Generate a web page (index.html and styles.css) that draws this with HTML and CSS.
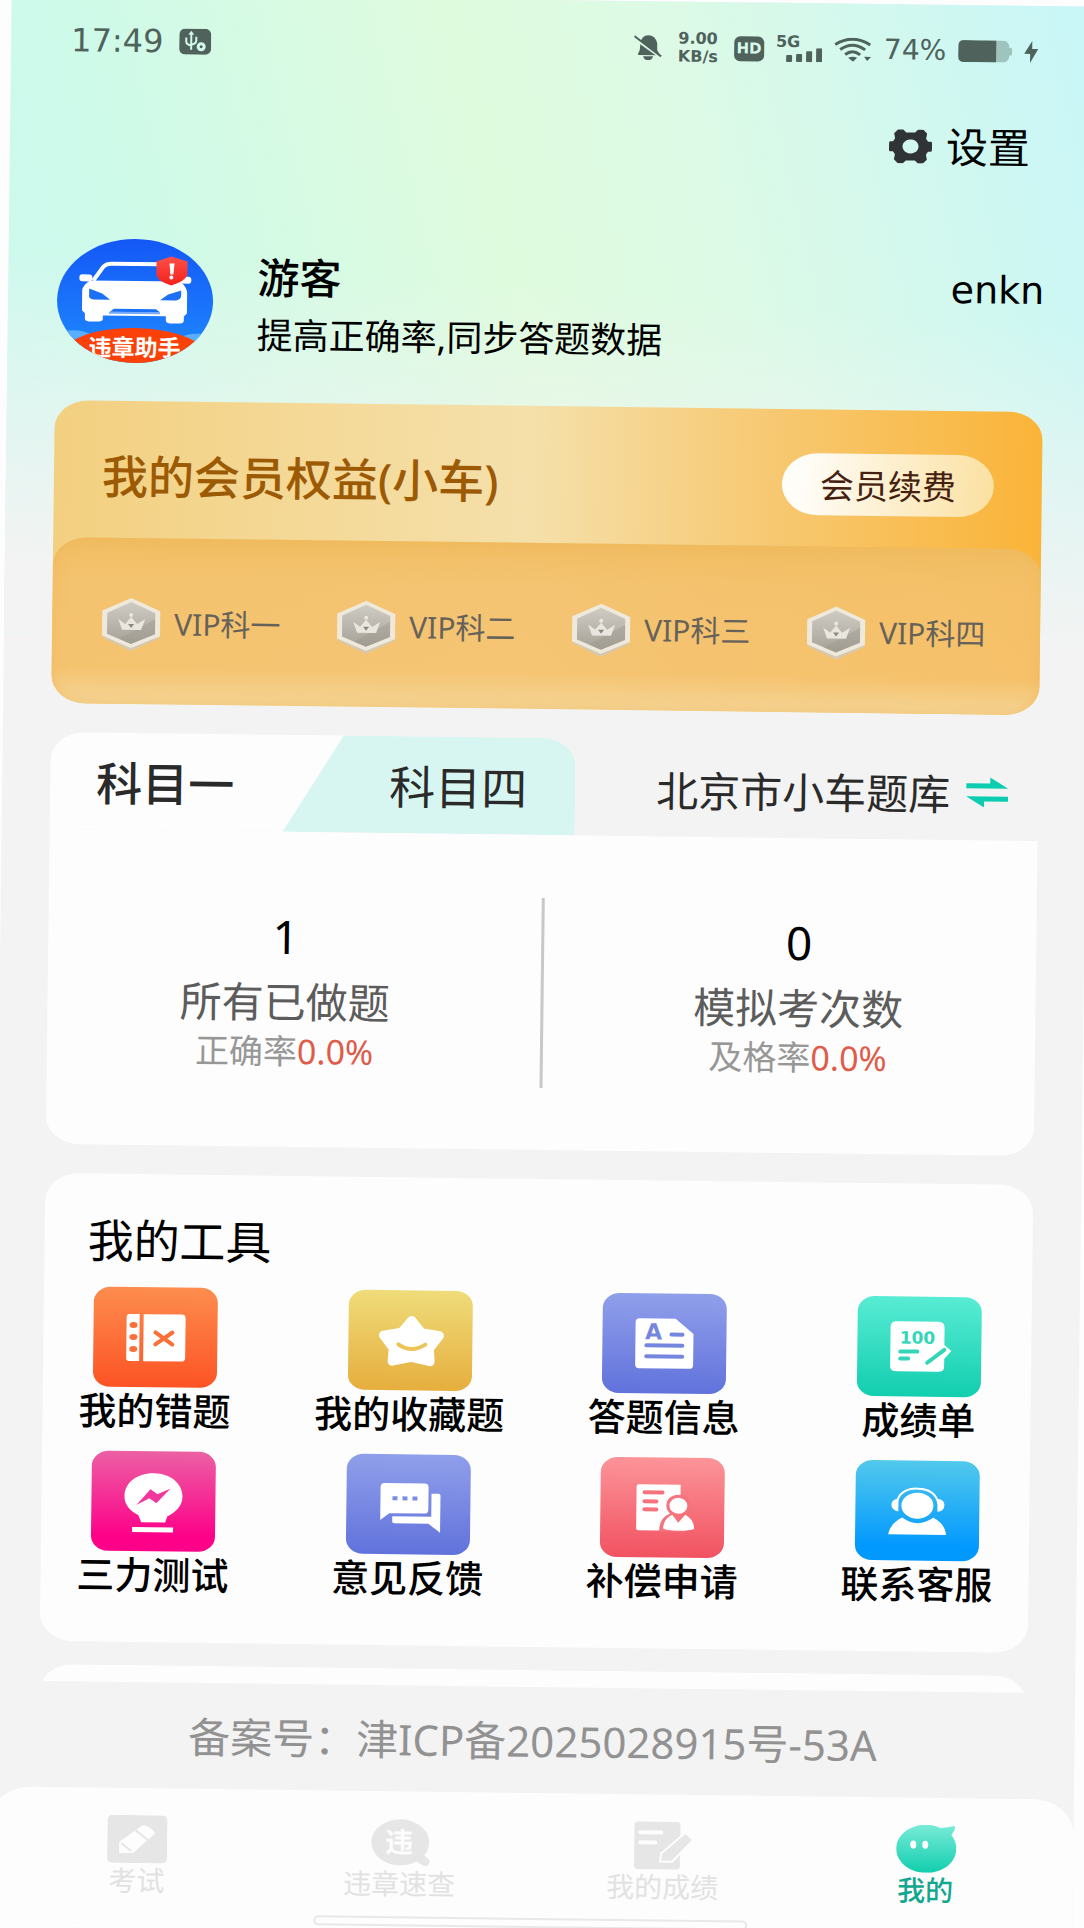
FILE: index.html
```html
<!DOCTYPE html>
<html lang="zh-CN">
<head>
    <meta charset="UTF-8">
    <meta name="viewport" content="width=device-width, initial-scale=1.0">
    <title>我的</title>
    <link rel="stylesheet" href="styles.css">
</head>
<body>
    <div class="screen">
        <div class="status-bar">
            <span class="time">17:49</span>
            <svg class="usb" width="32" height="26" viewBox="0 0 32 26">
                <rect width="32" height="26" rx="6" fill="#4f625c"/>
                <path d="M12 21V5M7 9v4q0 3 5 4M17 8v4q0 3-5 4" fill="none" stroke="#d2faea" stroke-width="2"/>
                <path d="M12 2l3 4H9z" fill="#d2faea"/>
                <circle cx="22" cy="18" r="3" fill="none" stroke="#d2faea" stroke-width="3"/>
            </svg>
            <div class="status-right">
                <svg width="28" height="26" viewBox="0 0 28 26">
                    <path d="M4 19q2-2 2-9Q7 1 14 1t9 8v7l2 3v2H4zM9 22h10q-1 4-5 4t-5-4z" fill="#4f625c"/>
                    <path d="M0 4l27 19" stroke="#dcfae6" stroke-width="3"/>
                    <path d="M0 2l27 20" stroke="#4f625c" stroke-width="2"/>
                </svg>
                <span class="speed"><b>9.00</b><b>KB/s</b></span>
                <span class="hd">HD</span>
                <span class="signal">
                    <b>5G</b>
                    <svg width="36" height="14" viewBox="0 0 36 14" fill="#4f625c">
                        <rect x="0" y="7" width="6" height="7" rx="1"/>
                        <rect x="10" y="6" width="6" height="8" rx="1"/>
                        <rect x="20" y="3" width="6" height="11" rx="1"/>
                        <rect x="30" y="0" width="6" height="14" rx="1"/>
                    </svg>
                </span>
                <svg width="38" height="24" viewBox="0 0 38 24">
                    <g fill="none" stroke="#4f625c" stroke-width="3">
                        <path d="M1 7Q18-4 36 7M6 12q12-9 25 0M11 17q7-6 15 0"/>
                    </g>
                    <path d="M14 20q5-2 9 0l-4 4zM30 19h7l-4 4z" fill="#4f625c"/>
                </svg>
                <span class="percent">74%</span>
                <svg width="54" height="22" viewBox="0 0 54 22">
                    <rect x="20" width="31" height="22" rx="6" fill="#9fc4bd"/>
                    <rect x="50" y="7" width="4" height="8" rx="2" fill="#9fc4bd"/>
                    <path d="M6 0h32v22H6q-6 0-6-6V6q0-6 6-6z" fill="#4f625c"/>
                </svg>
                <svg width="14" height="22" viewBox="0 0 14 22">
                    <path d="M8 0v8h6L6 22v-9H0z" fill="#4f625c"/>
                </svg>
            </div>
        </div>

        <div class="settings-row">
            <a href="#" class="settings">
                <svg width="43" height="34" viewBox="0 0 43 34">
                    <path fill="#303336" fill-rule="evenodd" d="M9 0h5l3 3h9l3-3h5l4 4-1 5 2 3h3q1 0 1 2v6q0 2-1 2h-3l-2 3 1 5-4 4h-5l-3-3h-9l-3 3H9l-4-4 1-5-2-3H1q-1 0-1-2v-6q0-2 1-2h3l2-3-1-5zM21 10a8 7 0 1 0 1 0z"/>
                </svg>
                <span>设置</span>
            </a>
        </div>

        <div class="profile">
            <svg class="avatar" width="158" height="126" viewBox="0 0 158 126">
                <defs>
                    <clipPath id="oval"><ellipse cx="79" cy="63" rx="78" ry="62"/></clipPath>
                    <linearGradient id="sky" x1="0" y1="0" x2="0" y2="1">
                        <stop offset="0" stop-color="#1457f6"/>
                        <stop offset="1" stop-color="#1f8cff"/>
                    </linearGradient>
                    <linearGradient id="shield" x1="0" y1="0" x2="0" y2="1">
                        <stop offset="0" stop-color="#fb5148"/>
                        <stop offset="1" stop-color="#f5211c"/>
                    </linearGradient>
                </defs>
                <g clip-path="url(#oval)">
                    <rect width="158" height="126" fill="url(#sky)"/>
                    <ellipse cx="18" cy="108" rx="26" ry="15" fill="#5aaeff"/>
                    <ellipse cx="142" cy="110" rx="26" ry="15" fill="#5aaeff"/>
                    <path d="M37 43l10-14q3-3 8-3h48q6 0 9 4l8 14" fill="none" stroke="#fff" stroke-width="4"/>
                    <rect x="23" y="37" width="13" height="7" rx="3" fill="#fff"/>
                    <rect x="122" y="38" width="13" height="7" rx="3" fill="#fff"/>
                    <path fill="#fff" d="M34 43h90q7 6 7 12v20l-3 3v4q0 3-4 3h-10q-4 0-4-3v-4H47v3q0 3-4 3H33q-4 0-4-3v-5l-3-3V53q0-5 8-10z"/>
                    <path fill="#1b70f5" d="M33 51l13 5 8 6H37q-5-1-4-5zM125 52l-13 4-8 6h16q5-1 5-5zM58 71h42l4 3H54z"/>
                    <path fill="#1b70f5" d="M53 74h51v2H53z" opacity="0.600"/>
                    <path fill="url(#shield)" d="M115 18l16 5v13q-2 7-16 11-14-4-15-11V23z"/>
                    <path d="M113 25h5l-1 11h-3z" fill="#fff"/>
                    <circle cx="115" cy="39" r="2" fill="#fff"/>
                    <ellipse cx="79" cy="122" rx="76" ry="32" fill="#fb4107"/>
                    <text x="79" y="118" text-anchor="middle" class="avatar-text">违章助手</text>
                </g>
            </svg>
            <div class="profile-info">
                <h1>游客</h1>
                <p>提高正确率,同步答题数据</p>
            </div>
            <span class="user-code">enkn</span>
        </div>

        <div class="vip-card">
            <div class="vip-head">
                <h2>我的会员权益(小车)</h2>
                <button class="renew">会员续费</button>
            </div>
            <div class="vip-list">
                <a href="#"><svg width="62" height="54" viewBox="0 0 62 54"><use href="#medal"/></svg>VIP科一</a>
                <a href="#"><svg width="62" height="54" viewBox="0 0 62 54"><use href="#medal"/></svg>VIP科二</a>
                <a href="#"><svg width="62" height="54" viewBox="0 0 62 54"><use href="#medal"/></svg>VIP科三</a>
                <a href="#"><svg width="62" height="54" viewBox="0 0 62 54"><use href="#medal"/></svg>VIP科四</a>
            </div>
        </div>

        <div class="subject">
            <div class="tabs">
                <button class="tab tab-one">科目一</button>
                <button class="tab tab-four">科目四</button>
                <a href="#" class="bank">
                    <span>北京市小车题库</span>
                    <svg width="42" height="30" viewBox="0 0 42 30" fill="#0ccdb0">
                        <path d="M0 6h24V0l18 11H0zM42 24H18v6L0 19h42z"/>
                    </svg>
                </a>
            </div>
            <div class="stats">
                <div class="stat">
                    <div class="number">1</div>
                    <div class="label">所有已做题</div>
                    <div class="rate">正确率<span>0.0%</span></div>
                </div>
                <div class="divider"></div>
                <div class="stat">
                    <div class="number">0</div>
                    <div class="label">模拟考次数</div>
                    <div class="rate">及格率<span>0.0%</span></div>
                </div>
            </div>
        </div>

        <div class="tools">
            <h2>我的工具</h2>
            <div class="tool-grid">
                <a href="#">
                    <svg class="orange" viewBox="0 0 124 100">
                        <path d="M36 27h10v47H36q-3 0-3-3V30q0-3 3-3zM50 27h38q4 0 4 4v39q0 4-4 4H50z" fill="#fff"/>
                        <g fill="#fb6f3b"><ellipse cx="40" cy="38" rx="4" ry="3"/><ellipse cx="40" cy="50" rx="4" ry="3"/><ellipse cx="40" cy="62" rx="4" ry="3"/></g>
                        <path d="M62 45l17 12M79 45L62 57" stroke="#fb6f3b" stroke-width="4" stroke-linecap="round"/>
                    </svg>
                    <span>我的错题</span>
                </a>
                <a href="#">
                    <svg class="yellow" viewBox="0 0 124 100">
                        <path d="M63 30l10 12 18 3-10 13 1 13-19-4-19 4 1-13-10-13 18-3z" fill="#fff" stroke="#fff" stroke-width="9" stroke-linejoin="round"/>
                        <path d="M50 54q13 9 27 0" fill="none" stroke="#ebc45a" stroke-width="4" stroke-linecap="round"/>
                    </svg>
                    <span>我的收藏题</span>
                </a>
                <a href="#">
                    <svg class="indigo" viewBox="0 0 124 100">
                        <path d="M37 25h36l18 15v31q0 4-4 4H37q-4 0-4-4V29q0-4 4-4z" fill="#fff"/>
                        <text x="51" y="46" text-anchor="middle" class="glyph-a">A</text>
                        <path d="M69 41h11M44 52h36M44 63h36" stroke="#7486de" stroke-width="4" stroke-linecap="round"/>
                    </svg>
                    <span>答题信息</span>
                </a>
                <a href="#">
                    <svg class="green" viewBox="0 0 124 100">
                        <path d="M39 25h42q6 0 6 6v17l7 6-7 8v8q0 5-6 5H39q-6 0-6-5V31q0-6 6-6z" fill="#fff"/>
                        <text x="60" y="47" text-anchor="middle" class="glyph-100">100</text>
                        <path d="M43 55h17M43 62h8M70 66l17-13" stroke="#34d6b8" stroke-width="4" stroke-linecap="round"/>
                    </svg>
                    <span>成绩单</span>
                </a>
                <a href="#">
                    <svg class="pink" viewBox="0 0 124 100">
                        <path d="M62 22c17 0 29 10 29 23 0 9-6 15-15 20l-2 6H50l-3-7c-8-4-14-10-14-19 0-13 12-23 29-23zM41 76h41v5H41z" fill="#fff"/>
                        <path d="M45 54l14-16 7 5 13-6-14 15-7-5z" fill="#f2369c"/>
                    </svg>
                    <span>三力测试</span>
                </a>
                <a href="#">
                    <svg class="indigo" viewBox="0 0 124 100">
                        <path d="M38 29h40q4 0 4 4v22q0 4-4 4H43l-9 7V33q0-4 4-4zM85 39h7q2 0 2 2v37l-12-9H48q-2 0-2-2v-5h39z" fill="#fff"/>
                        <path d="M46 42h5v4h-5zM56 42h5v4h-5zM66 42h5v4h-5z" fill="#7b8de3"/>
                    </svg>
                    <span>意见反馈</span>
                </a>
                <a href="#">
                    <svg class="coral" viewBox="0 0 124 100">
                        <path d="M38 27h42v46H38q-2 0-2-2V29q0-2 2-2z" fill="#fff"/>
                        <path d="M44 35h18M44 44h12M44 52h12" stroke="#f6727c" stroke-width="4" stroke-linecap="round"/>
                        <path d="M78 37q12 1 12 11 0 5-4 8H84v18H59q0-14 11-18-4-3-4-8 0-10 12-11z" fill="#f6727c"/>
                        <ellipse cx="78" cy="48" rx="9" ry="8" fill="#fff"/>
                        <path d="M72 57l6 8 7-8q9 5 9 14-5 2-16 2t-15-2q0-10 9-14z" fill="#fff"/>
                    </svg>
                    <span>补偿申请</span>
                </a>
                <a href="#">
                    <svg class="blue" viewBox="0 0 124 100">
                        <ellipse cx="62" cy="45" rx="16" ry="13" fill="#fff"/>
                        <path d="M41 43q3-15 21-15t21 15" fill="none" stroke="#fff" stroke-width="2"/>
                        <path d="M43 38v13q-7-1-7-7 0-5 7-6zM82 38v13q7-1 7-7 0-5-7-6zM47 57q15 11 31 0 12 6 13 17H33q2-11 14-17z" fill="#fff"/>
                    </svg>
                    <span>联系客服</span>
                </a>
            </div>
        </div>

        <div class="next-card"></div>

        <p class="record">备案号：津ICP备2025028915号-53A</p>

        <div class="nav-wrap">
            <nav class="nav">
                <a href="#">
                    <svg width="60" height="48" viewBox="0 0 60 48">
                        <rect width="60" height="48" rx="5" fill="#e6e6e6"/>
                        <path d="M12 27l23-17q7 0 13 8L26 38H12z" fill="#fdfdfd"/>
                        <path d="M28 15l13 10M14 28l10 8" stroke="#e6e6e6" stroke-width="2"/>
                    </svg>
                    <span>考试</span>
                </a>
                <a href="#">
                    <svg width="60" height="48" viewBox="0 0 60 48">
                        <ellipse cx="30" cy="24" rx="29" ry="23" fill="#e6e6e6"/>
                        <path d="M46 37l9 6" stroke="#e6e6e6" stroke-width="9" stroke-linecap="round"/>
                        <text x="29" y="34" text-anchor="middle" class="glyph-wei">违</text>
                    </svg>
                    <span>违章速查</span>
                </a>
                <a href="#">
                    <svg width="60" height="48" viewBox="0 0 60 48">
                        <rect x="1" width="46" height="48" rx="4" fill="#e6e6e6"/>
                        <path d="M7 11h21M7 21h15" stroke="#fdfdfd" stroke-width="4" stroke-linecap="round"/>
                        <path d="M52 11l8 7-21 22H27l1-8z" fill="#e6e6e6" stroke="#fdfdfd" stroke-width="2"/>
                    </svg>
                    <span>我的成绩</span>
                </a>
                <a href="#" class="active">
                    <svg width="60" height="48" viewBox="0 0 60 48">
                        <defs>
                            <linearGradient id="mint" x1="0" y1="0" x2="0" y2="1">
                                <stop offset="0" stop-color="#78ebd8"/>
                                <stop offset="1" stop-color="#12ceae"/>
                            </linearGradient>
                        </defs>
                        <path d="M30 0c5 0 9 1 14 3q7 0 14-2 2 2-3 9 5 6 5 14c0 13-13 24-30 24S0 37 0 24 13 0 30 0z" fill="url(#mint)"/>
                        <ellipse cx="17" cy="20" rx="3" ry="4" fill="#fff"/>
                        <ellipse cx="29" cy="20" rx="3" ry="4" fill="#fff"/>
                    </svg>
                    <span>我的</span>
                </a>
            </nav>
            <div class="home-bar"></div>
        </div>
    </div>

    <!-- shared medal icon -->
    <svg class="symbols" width="0" height="0">
        <defs>
            <linearGradient id="silver" x1="0" y1="0" x2="0" y2="1">
                <stop offset="0" stop-color="#cfccc4"/>
                <stop offset="1" stop-color="#a6a197"/>
            </linearGradient>
            <symbol id="medal" viewBox="0 0 62 54">
                <path d="M31 3l28 13v25L31 54 3 41V16z" fill="#d3c9b4"/>
                <path d="M31 1l29 13v25L31 51 2 39V14z" fill="#efe9db"/>
                <path d="M31 5l24 11v21L31 47 7 37V16z" fill="url(#silver)"/>
                <path d="M55 22v15L31 47l-12-5z" fill="#9b968c" opacity="0.400"/>
                <path d="M18 22l7 5 6-7 6 7 8-5-4 11H22z" fill="#e9e6df"/>
                <circle cx="31" cy="18" r="2" fill="#e9e6df"/>
                <path d="M28 27h6l-3 4z" fill="#8d887e"/>
            </symbol>
        </defs>
    </svg>
</body>
</html>
```
FILE: styles.css
```css
* {
    box-sizing: border-box;
}
html {
    height: 100%;
    overflow: hidden;
}
body {
    margin: 0;
    height: 100%;
    overflow: hidden;
    background-color: #fdfdfd;
    font-family: "Noto Sans", "Noto Sans CJK SC", sans-serif;
    color: #000;
}
h1, h2, p {
    margin: 0;
    font-weight: 400;
}
a {
    color: inherit;
    text-decoration: none;
}
button {
    border: none;
    padding: 0;
    background: none;
    font-family: inherit;
    color: inherit;
    cursor: pointer;
}
svg {
    display: block;
    flex-shrink: 0;
}
.symbols {
    position: absolute;
}

/* the whole screen sits slightly tilted */
.screen {
    min-height: 100%;
    display: flex;
    flex-direction: column;
    transform: rotate(0.7deg);
    background-color: #f3f3f3;
    background-image:
        linear-gradient(184deg, rgba(243,243,243,0) 45%, #f3f3f3 90%),
        linear-gradient(76deg, #ccf9f0 0%, #cdfaea 15%, #dffbde 48%, #dcfae6 66%, #c8f6f8 100%);
    background-size: 100% 640px;
    background-repeat: no-repeat;
}

/* status bar */
.status-bar {
    display: flex;
    align-items: center;
    height: 50px;
    margin-top: 21px;
    padding: 0 57px 0 60px;
    color: #4f625c;
    font-family: "DejaVu Sans", sans-serif;
}
.time {
    font-size: 32px;
    line-height: 40px;
}
.usb {
    margin-left: 16px;
}
.status-right {
    display: flex;
    align-items: center;
    gap: 12px;
    margin-left: auto;
}
.speed {
    display: flex;
    flex-direction: column;
    align-items: center;
    width: 48px;
    font-size: 16px;
    line-height: 18px;
}
.hd {
    width: 30px;
    height: 25px;
    border-radius: 6px;
    background-color: #4f625c;
    color: #d8faea;
    font-size: 15px;
    font-weight: bold;
    line-height: 25px;
    text-align: center;
}
.signal {
    display: flex;
    flex-direction: column;
    width: 46px;
}
.signal b {
    font-size: 16px;
    line-height: 12px;
}
.signal svg {
    align-self: flex-end;
}
.percent {
    font-size: 28px;
    line-height: 32px;
}

.settings-row {
    display: flex;
    justify-content: flex-end;
    margin-top: 43px;
    padding: 0 64px;
}
.settings {
    display: flex;
    align-items: center;
    gap: 14px;
    font-size: 42px;
    line-height: 56px;
}

/* profile */
.profile {
    display: flex;
    align-items: center;
    margin-top: 73px;
    padding: 0 48px;
}
.avatar-text {
    font-size: 23px;
    font-weight: bold;
    fill: #fff;
}
.profile-info {
    flex: 1;
    margin-left: 43px;
    padding-top: 8px;
}
.profile-info h1 {
    font-size: 42px;
    font-weight: 500;
    line-height: 58px;
}
.profile-info p {
    font-size: 36px;
    line-height: 58px;
}
.user-code {
    align-self: flex-start;
    margin-top: 18px;
    font-family: "DejaVu Sans", sans-serif;
    font-size: 38px;
    line-height: 48px;
}

/* membership */
.vip-card {
    margin: 37px 48px 0;
    border-radius: 34px / 28px;
    overflow: hidden;
    background: linear-gradient(90deg, #f3d080 0%, #f5e0ab 48%, #f7c973 72%, #fab438 100%);
}
.vip-head {
    display: flex;
    align-items: center;
    justify-content: space-between;
    height: 137px;
    padding: 12px 48px 0;
}
.vip-head h2 {
    color: #9c5a05;
    font-size: 46px;
    font-weight: 500;
    line-height: 56px;
}
.renew {
    width: 212px;
    height: 62px;
    border-radius: 36px / 31px;
    background: linear-gradient(95deg, #fffdf8 10%, #fbe0a0 100%);
    color: #45200f;
    font-size: 34px;
}
.vip-list {
    display: grid;
    grid-template-columns: repeat(4, 1fr);
    align-items: center;
    height: 166px;
    padding: 6px 0 0 48px;
    border-radius: 34px / 28px;
    background: linear-gradient(180deg, #f1bd62 0%, rgba(244,193,108,0.9) 25%, rgba(245,194,110,0.9) 78%, #f5d596 100%);
    box-shadow: inset 0 0 12px rgba(240,180,80,0.5);
}
.vip-list a {
    display: flex;
    align-items: center;
    gap: 12px;
    color: #66625a;
    font-size: 30px;
    line-height: 40px;
    white-space: nowrap;
}

/* subjects */
.subject {
    margin: 29px 48px 0;
}
.tabs {
    display: flex;
    height: 97px;
}
.tab {
    padding-bottom: 2px;
    color: #2a2a2a;
    font-size: 46px;
    text-align: left;
}
.tab-one {
    width: 293px;
    margin-right: -60px;
    padding-left: 46px;
    border-radius: 34px 0 0 0 / 28px 0 0 0;
    background-color: #fdfdfd;
    font-weight: 500;
}
.tab-four {
    width: 292px;
    padding-left: 106px;
    border-radius: 0 34px 0 0 / 0 28px 0 0;
    background-color: #d8f6f1;
    clip-path: polygon(60px 0, 100% 0, 100% 100%, 0 100%);
}
.bank {
    flex: 1;
    display: flex;
    align-items: center;
    justify-content: flex-end;
    gap: 16px;
    padding-right: 30px;
    color: #2a2a2a;
    font-size: 42px;
    white-space: nowrap;
}
.stats {
    display: flex;
    align-items: center;
    height: 315px;
    border-radius: 0 0 34px 34px / 0 0 28px 28px;
    background-color: #fdfdfd;
}
.stat {
    flex: 1;
    text-align: center;
}
.divider {
    width: 3px;
    height: 190px;
    margin: 0 18px;
    background-color: #c8c8c8;
}
.number {
    margin-bottom: 10px;
    font-size: 46px;
    line-height: 56px;
}
.label {
    color: #5c5c5c;
    font-size: 42px;
    line-height: 56px;
}
.rate {
    color: #979797;
    font-size: 34px;
    line-height: 42px;
}
.rate span {
    color: #e05b49;
}

/* tools */
.tools {
    margin: 29px 48px 0;
    padding: 38px 12px 45px;
    border-radius: 34px / 28px;
    background-color: #fdfdfd;
}
.tools h2 {
    margin: 0 0 19px 31px;
    font-size: 46px;
    line-height: 56px;
}
.tool-grid {
    display: grid;
    grid-template-columns: repeat(4, 200px);
    justify-content: space-between;
    row-gap: 18px;
}
.tool-grid a {
    display: flex;
    flex-direction: column;
    align-items: center;
    font-size: 38px;
    font-weight: 500;
    line-height: 46px;
    white-space: nowrap;
}
.tool-grid svg {
    width: 124px;
    height: 100px;
    border-radius: 17px / 15px;
}
.orange {
    background: linear-gradient(#fd8d4e, #fc5324);
}
.yellow {
    background: linear-gradient(#efdc7a, #e6ae3d);
}
.indigo {
    background: linear-gradient(#909fea, #6172dc);
}
.green {
    background: linear-gradient(#58ecd4, #12ceaf);
}
.pink {
    background: linear-gradient(#ec60a5, #fd0188 85%);
}
.coral {
    background: linear-gradient(#fc9499, #f15261);
}
.blue {
    background: linear-gradient(#52c9ec, #0299fe 85%);
}
.glyph-a {
    font: bold 22px "DejaVu Sans", sans-serif;
    fill: #7486de;
}
.glyph-100 {
    font: bold 17px "DejaVu Sans", sans-serif;
    fill: #34d6b8;
}

/* only the top of the next card shows above the record line */
.next-card {
    height: 17px;
    margin: 23px 48px 0;
    overflow: hidden;
}
.next-card::before {
    content: "";
    display: block;
    height: 80px;
    border-radius: 34px / 28px;
    background-color: #fdfdfd;
}
.record {
    padding: 26px 0 24px;
    color: #929292;
    font-size: 42px;
    line-height: 56px;
    text-align: center;
}

/* bottom navigation */
.nav-wrap {
    flex: 1;
    border-radius: 42px 42px 0 0 / 34px 34px 0 0;
    background-color: #fdfdfd;
}
.nav {
    display: flex;
    padding: 27px 16px 16px;
}
.nav a {
    flex: 1;
    display: flex;
    flex-direction: column;
    align-items: center;
    color: #e2e2e2;
    font-size: 28px;
    line-height: 34px;
}
.nav .active {
    color: #14a78f;
    font-weight: 500;
}
.glyph-wei {
    font-size: 28px;
    font-weight: bold;
    fill: #fdfdfd;
}
.home-bar {
    width: 40%;
    height: 10px;
    margin: 0 auto;
    border: 2px solid #e8e8e8;
    border-radius: 5px;
}
```
